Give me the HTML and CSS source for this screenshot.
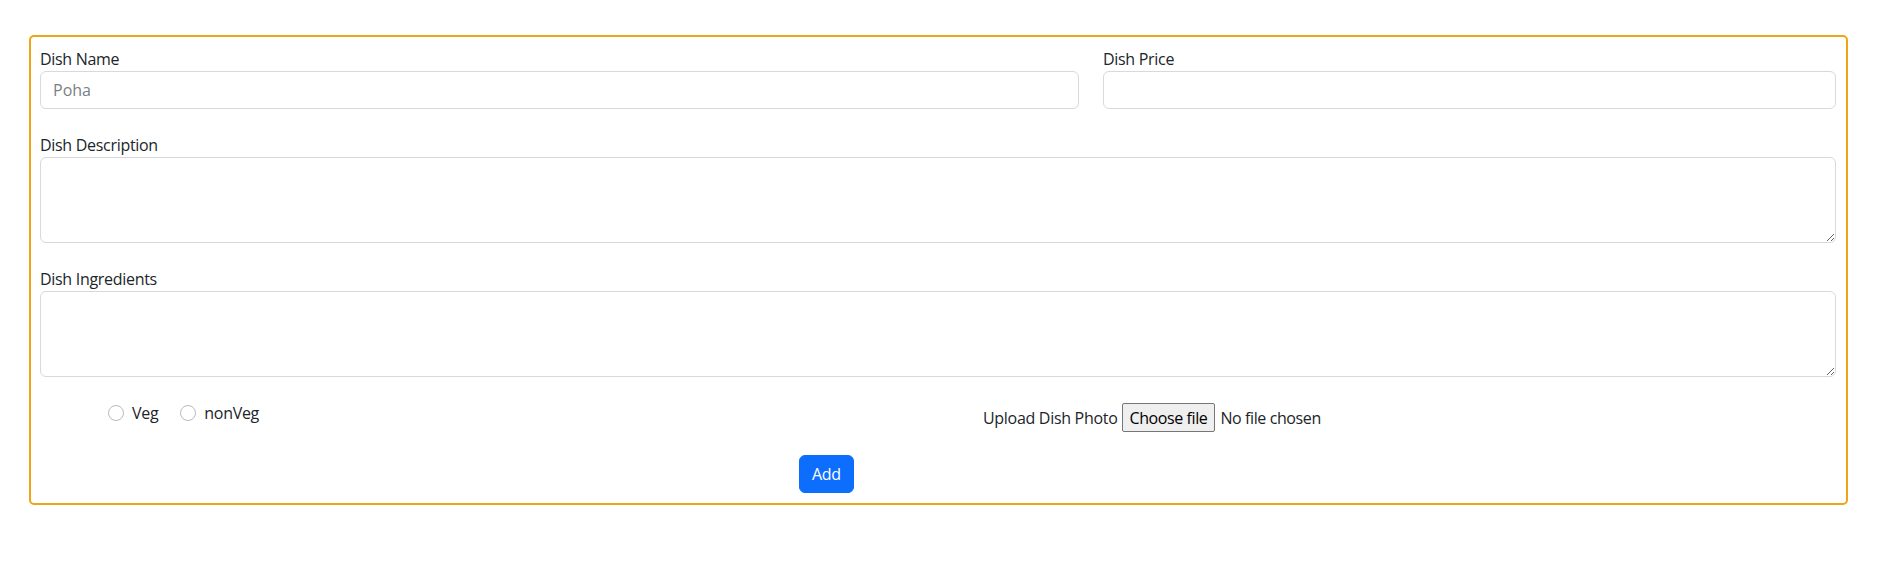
FILE: index.html
```html
<!DOCTYPE html>
<html lang="en">
<head>
<meta charset="utf-8">
<title>Add Dish</title>
<link rel="stylesheet" href="styles.css">
</head>
<body>
<div class="page">
  <form class="card">
    <div class="row-two">
      <div class="group">
        <label class="lbl" for="name">Dish Name</label>
        <input id="name" class="field" type="text" placeholder="Poha">
      </div>
      <div class="group">
        <label class="lbl" for="price">Dish Price</label>
        <input id="price" class="field" type="text">
      </div>
    </div>
    <div class="group">
      <label class="lbl" for="desc">Dish Description</label>
      <textarea id="desc" class="field area" rows="3"></textarea>
    </div>
    <div class="group">
      <label class="lbl" for="ingr">Dish Ingredients</label>
      <textarea id="ingr" class="field area" rows="3"></textarea>
    </div>
    <div class="options">
      <div class="radios">
        <label class="check"><span class="radio"></span>Veg</label>
        <label class="check"><span class="radio"></span>nonVeg</label>
      </div>
      <div class="upload">
        <span class="upload-text">Upload Dish Photo</span>
        <label class="file-btn" for="photo">Choose file</label>
        <span class="file-name">No file chosen</span>
        <input id="photo" class="file" type="file">
      </div>
    </div>
    <div class="actions">
      <button type="button" class="btn">Add</button>
    </div>
  </form>
</div>
</body>
</html>
```

FILE: styles.css
```css
* { box-sizing: border-box; }
html, body { margin: 0; background: #fff; }
body {
  font-family: "Open Sans", "Noto Sans", "Liberation Sans", sans-serif;
  font-size: 16px;
  line-height: 24px;
  color: #212529;
}
.page {
  padding: 35px 0 0 29px;
}
.card {
  width: 1819px;
  border: 2px solid #f0a517;
  border-radius: 5px;
  padding: 10px 10px 10px 9px;
}
.row-two {
  display: grid;
  grid-template-columns: 1039px 1fr;
  column-gap: 24px;
}
.group {
  margin-bottom: 24px;
}
.lbl {
  display: block;
  height: 24px;
  line-height: 24px;
  letter-spacing: -0.3px;
}
.field {
  display: block;
  width: 100%;
  height: 38px;
  padding: 6px 12px;
  font: inherit;
  color: #212529;
  background: #fff;
  border: 1px solid #d6d9dd;
  border-radius: 6px;
  outline: none;
}
.field::placeholder { color: #7a7f84; }
.area {
  height: 86px;
  resize: vertical;
}
.options {
  display: grid;
  grid-template-columns: 1fr 1fr;
  column-gap: 24px;
  align-items: start;
}
.radios {
  display: flex;
  padding-left: 68px;
  letter-spacing: -0.3px;
}
.check {
  display: flex;
  align-items: center;
  height: 24px;
  margin-right: 22px;
}
.radio {
  width: 16px;
  height: 16px;
  border: 1px solid #bababa;
  border-radius: 50%;
  margin-right: 8px;
  background: #fff;
}
.upload {
  display: flex;
  align-items: center;
  padding-left: 33px;
  padding-top: 2px;
  letter-spacing: -0.3px;
}
.upload-text {
  margin-right: 4px;
}
.file-btn {
  display: inline-flex;
  align-items: center;
  height: 29px;
  padding: 0 7px;
  margin-right: 5px;
  background: #efefef;
  border: 1px solid #767676;
  border-radius: 2px;
  color: #000;
  letter-spacing: -0.4px;
  cursor: default;
}
.file-name {
  letter-spacing: -0.4px;
}
.file {
  display: none;
}
.actions {
  display: flex;
  padding-left: 759px;
  margin-top: 23px;
}
.btn {
  font: inherit;
  height: 38px;
  padding: 6px 12px;
  color: #fff;
  background: #0d6efd;
  border: 1px solid #0d6efd;
  border-radius: 6px;
  letter-spacing: -0.3px;
}
```
